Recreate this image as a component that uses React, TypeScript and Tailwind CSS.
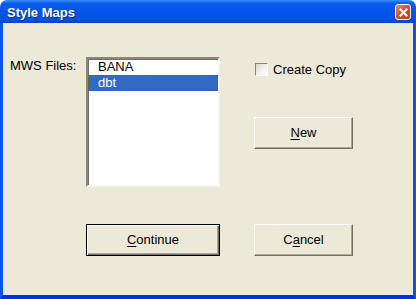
const font = "font-['Liberation_Sans',Arial,sans-serif]"

function XpButton({ children, primary = false, className = '' }: { children: React.ReactNode; primary?: boolean; className?: string }) {
  return (
    <button
      className={
        primary
          ? `h-[32px] bg-[#ece9d8] border border-black shadow-[inset_1px_1px_0_#fff,inset_-1px_-1px_0_#716f64,inset_-2px_-2px_0_#aca899] text-[13px] text-black flex items-center justify-center ${className}`
          : `h-[32px] bg-[#ece9d8] border border-t-white border-l-white border-r-[#716f64] border-b-[#716f64] shadow-[inset_-1px_-1px_0_#aca899] text-[13px] text-black flex items-center justify-center ${className}`
      }
    >
      {children}
    </button>
  )
}

export default function App() {
  return (
    <div className={`w-[416px] h-[299px] bg-white flex flex-col ${font}`}>
      {/* title bar */}
      <div className="h-[23px] flex items-start rounded-t-[7px] bg-[linear-gradient(to_bottom,#3d8ff8_0%,#0a5cf0_14%,#0055e8_50%,#0052e2_85%,#0043cf_100%)]">
        <span className="ml-[7px] mt-[5px] text-[13px] leading-[15px] font-bold text-white [text-shadow:1px_1px_0_#0a2a8a]">
          Style Maps
        </span>
        <div className="ml-auto mr-[5px] mt-[4px] w-[16px] h-[16px] rounded-[3px] border border-white bg-[linear-gradient(135deg,#e8866a_0%,#d9522a_45%,#c4391a_100%)] flex items-center justify-center">
          <svg width="9" height="9" viewBox="0 0 9 9">
            <path d="M1.5 1.5 L7.5 7.5 M7.5 1.5 L1.5 7.5" stroke="white" strokeWidth="2" strokeLinecap="square" />
          </svg>
        </div>
      </div>

      {/* body */}
      <div className="flex-1 bg-[#ece9d8] border-l-[3px] border-r-[3px] border-b-[4px] border-l-[#0a55ee] border-r-[#0a55ee] border-b-[#0833d4] pl-[7px] pt-[34px]">
        <div className="flex items-start">
          <div className="w-[76px] pt-[1px] text-[13px] leading-[15px] text-black">MWS Files:</div>

          <div className="w-[134px] h-[130px] bg-white border-[2px] border-t-[#8a877a] border-l-[#8a877a] border-r-[#f6f5ef] border-b-[#f6f5ef] shadow-[inset_1px_1px_0_#716f64]">
            <div className="h-[16px] pl-[10px] text-[13px] leading-[16px] text-black">BANA</div>
            <div className="h-[16px] pl-[9px] text-[13px] leading-[14px] text-white bg-[#316ac5] border border-dotted border-[#7a5a1a]">
              dbt
            </div>
          </div>

          <div className="ml-[34px] flex flex-col">
            <div className="mt-[5px] flex items-center gap-[5px] h-[15px]">
              <div className="ml-[1px] w-[13px] h-[13px] border border-t-[#8a877a] border-l-[#8a877a] border-r-white border-b-white bg-[linear-gradient(135deg,#d8d6cc_0%,#f4f3ee_60%,#ffffff_100%)]" />
              <span className="text-[13px] leading-[15px] text-black">Create Copy</span>
            </div>
            <XpButton className="mt-[40px] w-[99px]">
              <span><u className="underline-offset-2">N</u>ew</span>
            </XpButton>
          </div>
        </div>

        <div className="flex mt-[37px]">
          <div className="w-[76px]" />
          <XpButton primary className="w-[134px]">
            <span><u className="underline-offset-2">C</u>ontinue</span>
          </XpButton>
          <XpButton className="ml-[34px] w-[99px]">
            <span>C<u className="underline-offset-2">a</u>ncel</span>
          </XpButton>
        </div>
      </div>
    </div>
  )
}
